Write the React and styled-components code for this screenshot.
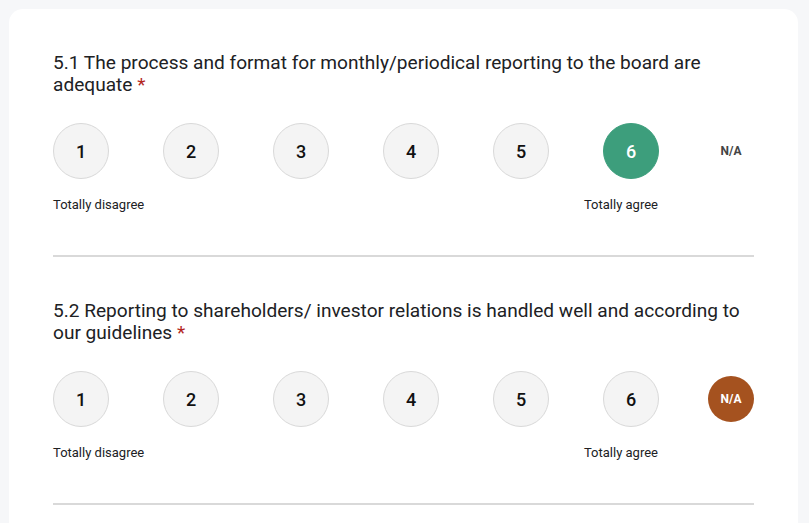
import styled, { createGlobalStyle } from "styled-components";

const GlobalStyle = createGlobalStyle`
  body {
    margin: 0;
    background: #f6f7f9;
    font-family: Roboto, "Liberation Sans", sans-serif;
    color: #202124;
  }
`;

const questions = [
  {
    title: "5.1 The process and format for monthly/periodical reporting to the board are adequate",
    selected: 6,
  },
  {
    title: "5.2 Reporting to shareholders/ investor relations is handled well and according to our guidelines",
    selected: "na",
  },
];

export default function App() {
  return (
    <>
      <GlobalStyle />
      <Page>
        <Card>
          {questions.map((q) => (
            <Question key={q.title}>
              <Title>
                {q.title} <Star>*</Star>
              </Title>
              <Scale>
                <Numbers>
                  {[1, 2, 3, 4, 5, 6].map((n) => (
                    <Circle key={n} $active={q.selected === n}>
                      {n}
                    </Circle>
                  ))}
                </Numbers>
                <NotApplicable $active={q.selected === "na"}>N/A</NotApplicable>
              </Scale>
              <Labels>
                <span>Totally disagree</span>
                <span>Totally agree</span>
              </Labels>
              <Divider />
            </Question>
          ))}
        </Card>
      </Page>
    </>
  );
}

const Page = styled.div`
  height: 523px;
  overflow: hidden;
  padding: 9px 11px 0 9px;
  box-sizing: border-box;
`;

const Card = styled.div`
  background: #ffffff;
  border-radius: 14px 14px 0 0;
  padding: 43px 44px 0 44px;
  min-height: 600px;
`;

const Question = styled.div`
  display: flex;
  flex-direction: column;
  margin-bottom: 43px;
`;

const Title = styled.h2`
  margin: 0;
  font-size: 19.1px;
  font-weight: 400;
  line-height: 22px;
  color: #202124;
`;

const Star = styled.span`
  color: #b3261e;
`;

const Scale = styled.div`
  display: flex;
  justify-content: space-between;
  align-items: center;
  margin-top: 27px;
  height: 56px;
`;

const Numbers = styled.div`
  display: flex;
  gap: 54px;
`;

const Circle = styled.div`
  width: 56px;
  height: 56px;
  flex-shrink: 0;
  box-sizing: border-box;
  border-radius: 50%;
  display: flex;
  align-items: center;
  justify-content: center;
  font-size: 18px;
  font-weight: 500;
  background: ${(p) => (p.$active ? "#3d9e7c" : "#f4f4f4")};
  border: 1px solid ${(p) => (p.$active ? "#3d9e7c" : "#d9d9d9")};
  color: ${(p) => (p.$active ? "#ffffff" : "#111111")};
`;

const NotApplicable = styled.div`
  width: 46px;
  height: 46px;
  flex-shrink: 0;
  border-radius: 50%;
  display: flex;
  align-items: center;
  justify-content: center;
  font-size: 12px;
  font-weight: 700;
  background: ${(p) => (p.$active ? "#a5521f" : "transparent")};
  color: ${(p) => (p.$active ? "#ffffff" : "#444444")};
`;

const Labels = styled.div`
  display: flex;
  justify-content: space-between;
  margin-top: 18px;
  padding-right: 96px;
  font-size: 13px;
  line-height: 16px;
  color: #202124;
`;

const Divider = styled.div`
  height: 2px;
  background: #d9d9d9;
  margin-top: 42px;
`;
